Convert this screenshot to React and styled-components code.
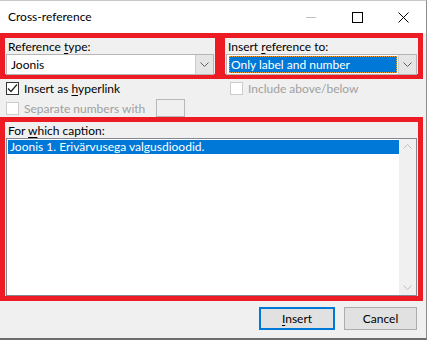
import React from 'react';
import styled, { createGlobalStyle } from 'styled-components';

const Global = createGlobalStyle`
  html, body {
    margin: 0;
    padding: 0;
    background: #ffffff;
  }
  body {
    font-family: Lato, "Noto Sans", sans-serif;
    font-size: 12px;
    color: #000;
  }
`;

const RED = '#ed1c24';

const Window = styled.div`
  width: 427px;
  height: 340px;
  box-sizing: border-box;
  border-right: 1px solid #8c8c8c;
  border-bottom: 2px solid #6d6d6d;
  border-top: 1px solid #c8c8c8;
  background: #f0f0f0;
  display: flex;
  flex-direction: column;
`;

const TitleBar = styled.div`
  height: 32px;
  background: #fff;
  display: flex;
  align-items: center;
  padding-left: 8px;
  flex-shrink: 0;
`;

const Title = styled.div`
  flex: 1;
  font-size: 12px;
  margin-top: -2px;
`;

const TitleButton = styled.div`
  width: 46px;
  height: 32px;
  display: flex;
  align-items: center;
  justify-content: center;
`;

const Body = styled.div`
  flex: 1;
  display: flex;
  flex-direction: column;
  padding: 0 3px 0 0;
`;

const TopRow = styled.div`
  display: grid;
  grid-template-columns: 220px 203px;
`;

const RedBox = styled.div`
  border: 5px solid ${RED};
  box-sizing: border-box;
  height: ${(p) => p.$h}px;
  padding: ${(p) => p.$pad || '0'};
`;

const Label = styled.div`
  line-height: 15px;
  height: 15px;
  padding-left: ${(p) => p.$indent || 2}px;
`;

const Combo = styled.div`
  height: 21px;
  box-sizing: border-box;
  border: 1px solid #b6b6b6;
  background: #fff;
  display: flex;
`;

const ComboValue = styled.div`
  flex: 1;
  display: flex;
  align-items: center;
  padding: 0 ${(p) => (p.$selected ? 1 : 4)}px;
`;

const Selected = styled.div`
  flex: 1;
  align-self: stretch;
  margin: 1px 0 1px 1px;
  background: #0078d7;
  color: #fff;
  outline: 1px dotted #f0a030;
  outline-offset: -1px;
  display: flex;
  align-items: center;
  padding-left: 2px;
`;

const DropButton = styled.div`
  width: 17px;
  background: #e5e5e5;
  border-left: 1px solid #cccccc;
  display: flex;
  align-items: center;
  justify-content: center;
`;

const OptionsRow = styled.div`
  display: grid;
  grid-template-columns: 222px 1fr;
  padding-top: 2px;
  height: 38px;
  box-sizing: border-box;
`;

const OptionCol = styled.div`
  display: flex;
  flex-direction: column;
  gap: 6px;
  padding-left: ${(p) => p.$pl || 6}px;
`;

const Check = styled.div`
  display: flex;
  align-items: center;
  gap: 5px;
  height: 14px;
  color: ${(p) => (p.$disabled ? '#a0a0a0' : '#000')};
`;

const Box = styled.span`
  width: 13px;
  height: 13px;
  flex-shrink: 0;
  box-sizing: border-box;
  border: 1px solid ${(p) => (p.$disabled ? '#cccccc' : '#333333')};
  background: #fff;
  display: flex;
  align-items: center;
  justify-content: center;
`;

const SmallInput = styled.span`
  width: 29px;
  height: 18px;
  box-sizing: border-box;
  border: 1px solid #b8b8b8;
  background: #f0f0f0;
  margin-left: 6px;
  margin-top: -1px;
`;

const ListBox = styled.div`
  height: 158px;
  box-sizing: border-box;
  border: 1px solid #828790;
  background: #fff;
  display: flex;
`;

const ListItems = styled.div`
  flex: 1;
  padding: 1px 0 0 1px;
`;

const ListItem = styled.div`
  height: 14px;
  line-height: 14px;
  background: ${(p) => (p.$selected ? '#0078d7' : 'transparent')};
  color: ${(p) => (p.$selected ? '#fff' : '#000')};
  padding-left: 2px;
`;

const ScrollBar = styled.div`
  width: 17px;
  background: #f0f0f0;
  display: flex;
  flex-direction: column;
  justify-content: space-between;
  align-items: center;
  padding: 5px 0;
`;

const Footer = styled.div`
  display: flex;
  justify-content: flex-end;
  gap: 9px;
  padding: 6px 6px 0 0;
`;

const Button = styled.button`
  width: ${(p) => (p.$primary ? 76 : 73)}px;
  height: 23px;
  box-sizing: border-box;
  background: #e1e1e1;
  border: ${(p) => (p.$primary ? '2px solid #0078d7' : '1px solid #adadad')};
  font-family: inherit;
  font-size: 12px;
  color: #000;
  padding: 0;
`;

const U = styled.span`
  text-decoration: underline;
  text-underline-offset: 2px;
`;

const Chevron = ({ up, color = '#606060' }) => (
  <svg width="9" height="5" viewBox="0 0 9 5">
    <path
      d={up ? 'M0.5 4.5 L4.5 0.5 L8.5 4.5' : 'M0.5 0.5 L4.5 4.5 L8.5 0.5'}
      fill="none"
      stroke={color}
      strokeWidth="1"
    />
  </svg>
);

const Tick = () => (
  <svg width="11" height="11" viewBox="0 0 11 11">
    <path d="M1 5.5 L4 8.5 L10 1.5" fill="none" stroke="#222" strokeWidth="1.2" />
  </svg>
);

export default function App() {
  return (
    <>
      <Global />
      <Window>
        <TitleBar>
          <Title>Cross-reference</Title>
          <TitleButton>
            <svg width="10" height="1">
              <rect width="10" height="1" fill="#c0c0c0" />
            </svg>
          </TitleButton>
          <TitleButton>
            <svg width="11" height="11">
              <rect x="0.5" y="0.5" width="10" height="10" fill="none" stroke="#000" />
            </svg>
          </TitleButton>
          <TitleButton>
            <svg width="11" height="11">
              <path d="M0.5 0.5 L10.5 10.5 M10.5 0.5 L0.5 10.5" stroke="#000" />
            </svg>
          </TitleButton>
        </TitleBar>
        <Body>
          <TopRow>
            <RedBox $h={46} $pad="1px 1px 0 1px">
              <Label>
                Reference <U>t</U>ype:
              </Label>
              <Combo>
                <ComboValue>Joonis</ComboValue>
                <DropButton>
                  <Chevron />
                </DropButton>
              </Combo>
            </RedBox>
            <RedBox $h={46} $pad="1px 1px 0 1px">
              <Label>
                Insert <U>r</U>eference to:
              </Label>
              <Combo>
                <ComboValue $selected>
                  <Selected>Only label and number</Selected>
                </ComboValue>
                <DropButton>
                  <Chevron />
                </DropButton>
              </Combo>
            </RedBox>
          </TopRow>
          <OptionsRow>
            <OptionCol>
              <Check>
                <Box>
                  <Tick />
                </Box>
                <span>
                  Insert as <U>h</U>yperlink
                </span>
              </Check>
              <Check $disabled>
                <Box $disabled />
                <span>Separate numbers with</span>
                <SmallInput />
              </Check>
            </OptionCol>
            <OptionCol $pl={8}>
              <Check $disabled>
                <Box $disabled />
                <span>Include above/below</span>
              </Check>
            </OptionCol>
          </OptionsRow>
          <RedBox $h={184} $pad="1px 1px 0 1px">
            <Label>
              For <U>w</U>hich caption:
            </Label>
            <ListBox>
              <ListItems>
                <ListItem $selected>Joonis 1. Erivärvusega valgusdioodid.</ListItem>
              </ListItems>
              <ScrollBar>
                <Chevron up color="#c0c0c0" />
                <Chevron color="#c0c0c0" />
              </ScrollBar>
            </ListBox>
          </RedBox>
          <Footer>
            <Button $primary>
              <U>I</U>nsert
            </Button>
            <Button>Cancel</Button>
          </Footer>
        </Body>
      </Window>
    </>
  );
}
